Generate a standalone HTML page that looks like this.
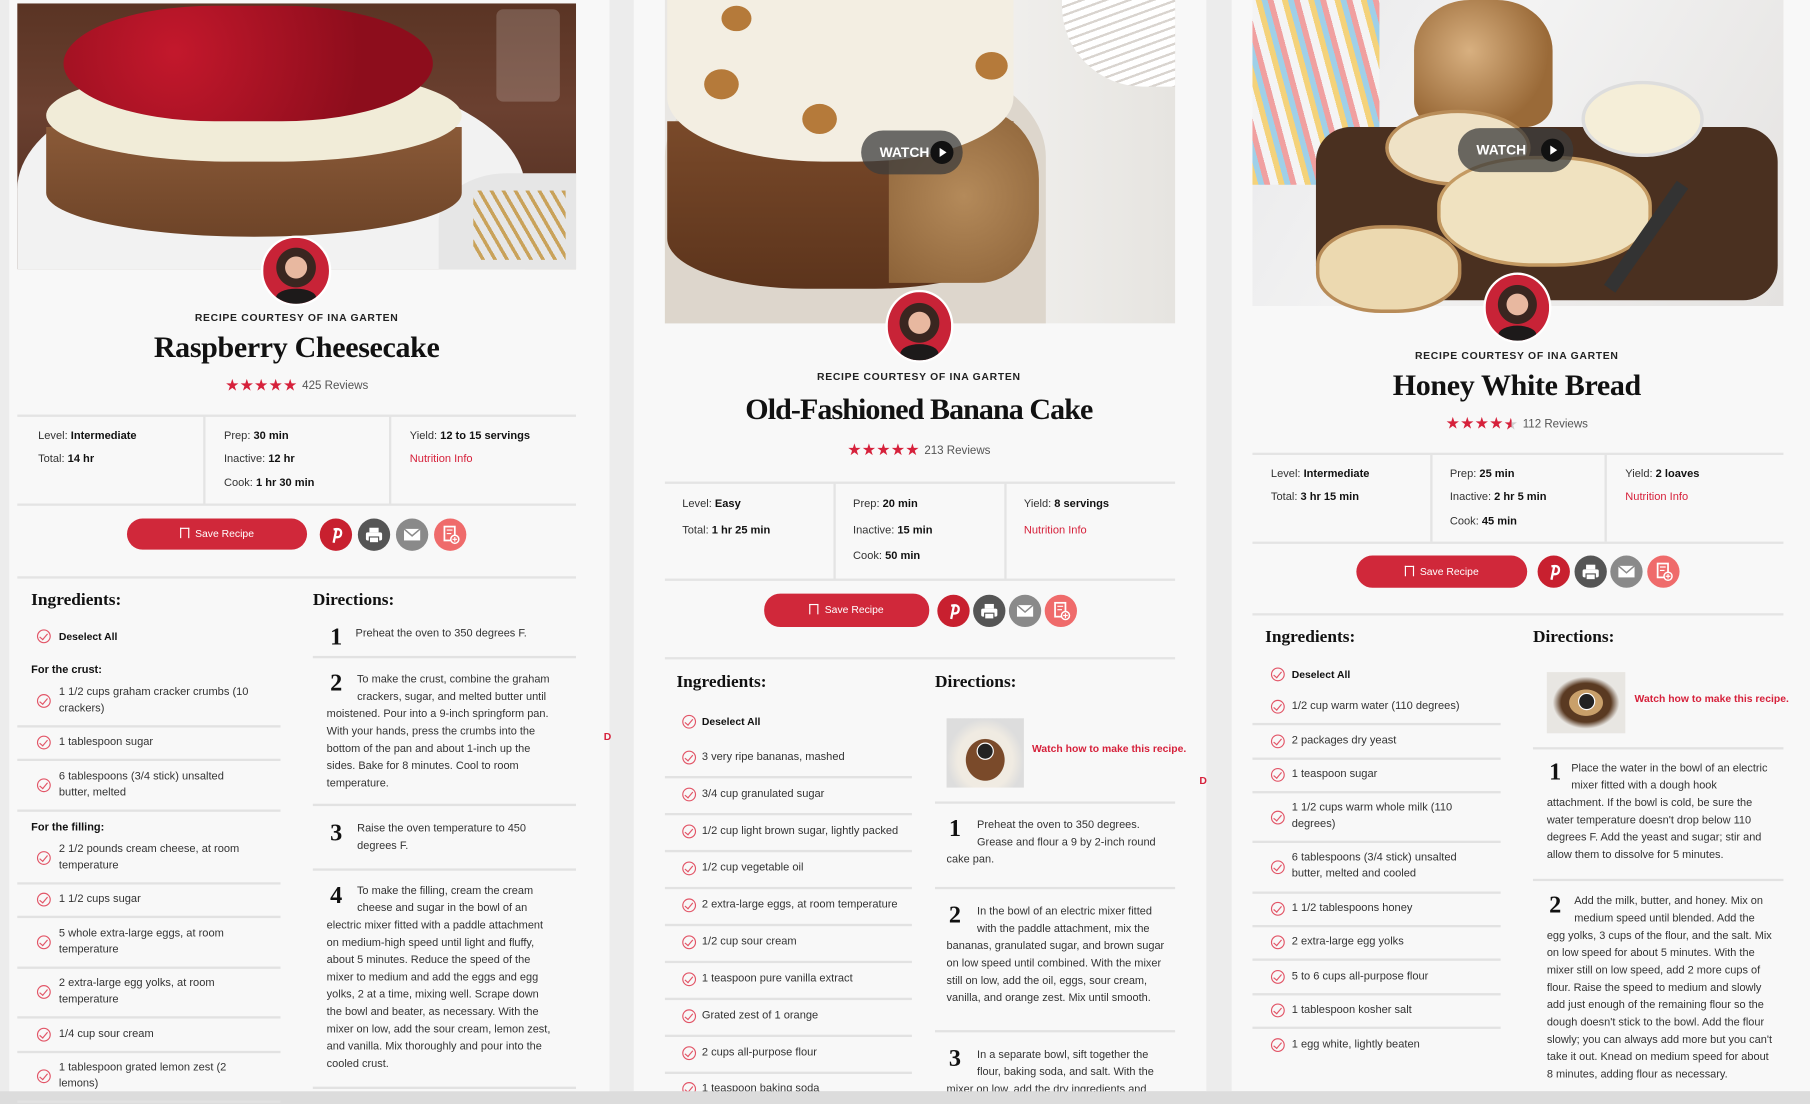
<!DOCTYPE html>
<html><head><meta charset="utf-8">
<style>
html,body{margin:0;padding:0;background:#ececec;overflow:hidden;width:1810px;height:1104px}
#w{position:absolute;left:0;top:0;width:1568px;height:956px;transform:scale(1.15434,1.1548);transform-origin:0 0;font-family:"Liberation Sans",sans-serif;color:#222}
.pn{position:absolute;background:#f8f8f8}
.a{position:absolute;white-space:nowrap}
.t{position:absolute;white-space:nowrap;font-size:9.6px;line-height:14px;color:#333}
.t b{color:#111}
.rc{position:absolute;white-space:nowrap;font-size:9px;letter-spacing:.6px;font-weight:bold;color:#222;transform:translateX(-50%)}
.ti{position:absolute;white-space:nowrap;font-family:"Liberation Serif",serif;font-weight:bold;font-size:26px;color:#111;transform:translateX(-50%);letter-spacing:-.3px}
.st{position:absolute;white-space:nowrap;transform:translateX(-50%);font-size:10px;color:#555}
.st span{color:#d6213b;font-size:14px;letter-spacing:0px;margin-right:4px;vertical-align:-1px}
.hl{position:absolute;height:2px;background:#e4e4e4}
.vl{position:absolute;width:2px;background:#e4e4e4}
.red{color:#d6213b}
.h{position:absolute;font-family:"Liberation Serif",serif;font-weight:bold;font-size:15px;color:#111}
.ck{position:absolute;width:10px;height:10px;border:1.3px solid #e25567;border-radius:50%}
.ck:after{content:"";position:absolute;left:3.3px;top:1px;width:2.6px;height:5.5px;border-right:1.3px solid #e25567;border-bottom:1.3px solid #e25567;transform:rotate(40deg)}
.ln{position:absolute;height:1.5px;background:#e2e2e2}
.num{position:absolute;font-family:"Liberation Serif",serif;font-weight:bold;font-size:21px;color:#111;line-height:20px}
.dt{position:absolute;white-space:nowrap;font-size:9.5px;line-height:15px;color:#333}
.av{position:absolute;border-radius:50%;border:2.5px solid #fff;background:radial-gradient(circle at 50% 45%,#e8b8a0 0 22%,#3a2620 23% 40%,#c82337 41%);overflow:hidden}
.av:after{content:"";position:absolute;left:20%;right:20%;bottom:-5%;height:28%;background:#1d1a1a;border-radius:50% 50% 0 0}
.sv{position:absolute;background:#d0283a;border-radius:14px;color:#fff;font-size:9px;text-align:center}
.sv i{display:inline-block;width:6px;height:8px;border:1px solid #fff;border-bottom:none;margin-right:5px;vertical-align:-1px}
.ic{position:absolute;width:28px;height:28px;border-radius:50%}
.ic svg{position:absolute;left:0;top:0}
.wt{position:absolute;font-size:9px;font-weight:bold;color:#d6213b;white-space:nowrap}
.watch{position:absolute;height:38px;border-radius:19px;background:rgba(60,60,60,.75);color:#fff;font-weight:bold;font-size:12px;line-height:38px}
.watch i{position:absolute;right:8px;top:9px;width:20px;height:20px;border-radius:50%;background:#111}
.watch i:after{content:"";position:absolute;left:8px;top:6px;border-left:6px solid #fff;border-top:4px solid transparent;border-bottom:4px solid transparent}
</style></head><body><div id="w">

<!-- panels -->
<div class="pn" style="left:8px;top:0;width:520px;height:956px"></div>
<div class="pn" style="left:549px;top:0;width:496px;height:945px"></div>
<div class="pn" style="left:1067px;top:0;width:501px;height:945px"></div>
<div class="a" style="left:0;top:945px;width:1568px;height:11px;background:#dcdcdc"></div>

<!-- ============ PANEL 1 ============ -->
<div class="a" style="left:15px;top:3px;width:484px;height:230px;background:linear-gradient(180deg,#5a3424 0,#6b4030 40%,#4a2a1c 100%)"></div>
<div class="a" style="left:15px;top:60px;width:440px;height:173px;border-radius:50% 50% 0 0/60% 60% 0 0;background:#f2f2f2"></div>
<div class="a" style="left:380px;top:150px;width:119px;height:83px;border-radius:50% 0 0 0;background:#e6e6e6"></div>
<div class="a" style="left:410px;top:165px;width:80px;height:60px;background:repeating-linear-gradient(60deg,transparent 0 6px,#c9a25a 6px 9px)"></div>
<div class="a" style="left:40px;top:110px;width:360px;height:95px;border-radius:0 0 50% 50%/0 0 40% 40%;background:linear-gradient(180deg,#8a5a38,#6e4428)"></div>
<div class="a" style="left:40px;top:60px;width:360px;height:80px;border-radius:45%/50%;background:#f1ecd8"></div>
<div class="a" style="left:55px;top:5px;width:320px;height:100px;border-radius:45%/55%;background:radial-gradient(circle at 30% 40%,#c3182c,#8d0d1c 70%)"></div>
<div class="a" style="left:430px;top:8px;width:55px;height:80px;background:rgba(255,255,255,.18);border-radius:6px"></div>
<div class="av" style="left:226px;top:204px;width:57px;height:57px"></div>
<div class="rc" style="left:257px;top:270px">RECIPE COURTESY OF INA GARTEN</div>
<div class="ti" style="left:257px;top:286px">Raspberry Cheesecake</div>
<div class="st" style="left:257px;top:325px"><span>★★★★★</span>425 Reviews</div>
<div class="hl" style="left:15px;top:359px;width:484px"></div>
<div class="hl" style="left:15px;top:436px;width:484px"></div>
<div class="vl" style="left:176px;top:360px;height:76px"></div>
<div class="vl" style="left:337px;top:360px;height:76px"></div>
<div class="t" style="left:33px;top:371px">Level: <b>Intermediate</b></div>
<div class="t" style="left:33px;top:391px">Total: <b>14 hr</b></div>
<div class="t" style="left:194px;top:371px">Prep: <b>30 min</b></div>
<div class="t" style="left:194px;top:391px">Inactive: <b>12 hr</b></div>
<div class="t" style="left:194px;top:412px">Cook: <b>1 hr 30 min</b></div>
<div class="t" style="left:355px;top:371px">Yield: <b>12 to 15 servings</b></div>
<div class="t red" style="left:355px;top:391px">Nutrition Info</div>
<div class="sv" style="left:110px;top:449px;width:156px;height:27px;line-height:27px"><i></i>Save Recipe</div>
<div class="ic" style="left:277px;top:449px;background:#c8202f"><svg width="28" height="28"><path d="M12 21 L14.5 9 M12 9.5 Q19 8 18.5 13 Q18 17 13.5 16" fill="none" stroke="#fff" stroke-width="2"/></svg></div>
<div class="ic" style="left:310px;top:449px;background:#555"><svg width="28" height="28"><rect x="10" y="8" width="8" height="4" fill="#fff"/><rect x="7" y="12" width="14" height="7" rx="1.5" fill="#fff"/><rect x="10" y="16" width="8" height="5" fill="#fff" stroke="#555" stroke-width="1"/></svg></div>
<div class="ic" style="left:343px;top:449px;background:#8a8a8a"><svg width="28" height="28"><rect x="7" y="9" width="14" height="10" fill="#fff"/><path d="M7 9 L14 15 L21 9" fill="none" stroke="#8a8a8a" stroke-width="1.3"/></svg></div>
<div class="ic" style="left:376px;top:449px;background:#ef6b6b"><svg width="28" height="28"><rect x="9" y="7" width="9" height="12" fill="none" stroke="#fff" stroke-width="1.5"/><path d="M11 10h5M11 13h4" stroke="#fff"/><circle cx="18" cy="18" r="3.5" fill="#ef6b6b" stroke="#fff" stroke-width="1.3"/><path d="M18 16v4M16 18h4" stroke="#fff"/></svg></div>
<div class="hl" style="left:15px;top:499px;width:484px"></div>
<div class="h" style="left:27px;top:512px">Ingredients:</div>
<div class="h" style="left:271px;top:512px">Directions:</div>
<div class="ck" style="left:32px;top:545px"></div><div class="t" style="left:51px;top:544px;font-size:9px"><b>Deselect All</b></div>
<div class="t" style="left:27px;top:574px;font-size:9.5px"><b>For the crust:</b></div>
<div class="ck" style="left:32px;top:601px"></div><div class="t" style="left:51px;top:593px">1 1/2 cups graham cracker crumbs (10<br>crackers)</div>
<div class="ln" style="left:15px;top:628px;width:228px"></div>
<div class="ck" style="left:32px;top:637px"></div><div class="t" style="left:51px;top:636px">1 tablespoon sugar</div>
<div class="ln" style="left:15px;top:657px;width:228px"></div>
<div class="ck" style="left:32px;top:674px"></div><div class="t" style="left:51px;top:666px">6 tablespoons (3/4 stick) unsalted<br>butter, melted</div>
<div class="ln" style="left:15px;top:701px;width:228px"></div>
<div class="t" style="left:27px;top:710px;font-size:9.5px"><b>For the filling:</b></div>
<div class="ck" style="left:32px;top:737px"></div><div class="t" style="left:51px;top:729px">2 1/2 pounds cream cheese, at room<br>temperature</div>
<div class="ln" style="left:15px;top:764px;width:228px"></div>
<div class="ck" style="left:32px;top:773px"></div><div class="t" style="left:51px;top:772px">1 1/2 cups sugar</div>
<div class="ln" style="left:15px;top:793px;width:228px"></div>
<div class="ck" style="left:32px;top:810px"></div><div class="t" style="left:51px;top:802px">5 whole extra-large eggs, at room<br>temperature</div>
<div class="ln" style="left:15px;top:837px;width:228px"></div>
<div class="ck" style="left:32px;top:853px"></div><div class="t" style="left:51px;top:845px">2 extra-large egg yolks, at room<br>temperature</div>
<div class="ln" style="left:15px;top:880px;width:228px"></div>
<div class="ck" style="left:32px;top:890px"></div><div class="t" style="left:51px;top:889px">1/4 cup sour cream</div>
<div class="ln" style="left:15px;top:910px;width:228px"></div>
<div class="ck" style="left:32px;top:926px"></div><div class="t" style="left:51px;top:918px">1 tablespoon grated lemon zest (2<br>lemons)</div>
<div class="ln" style="left:15px;top:953px;width:228px"></div>

<div class="num" style="left:286px;top:541px">1</div>
<div class="dt" style="left:308px;top:541px">Preheat the oven to 350 degrees F.</div>
<div class="ln" style="left:271px;top:568px;width:228px"></div>
<div class="num" style="left:286px;top:581px">2</div>
<div class="dt" style="left:283px;top:581px">&nbsp; &nbsp; &nbsp; &nbsp; &nbsp; To make the crust, combine the graham<br>&nbsp; &nbsp; &nbsp; &nbsp; &nbsp; crackers, sugar, and melted butter until<br>moistened. Pour into a 9-inch springform pan.<br>With your hands, press the crumbs into the<br>bottom of the pan and about 1-inch up the<br>sides. Bake for 8 minutes. Cool to room<br>temperature.</div>
<div class="ln" style="left:271px;top:696px;width:228px"></div>
<div class="num" style="left:286px;top:711px">3</div>
<div class="dt" style="left:283px;top:710px">&nbsp; &nbsp; &nbsp; &nbsp; &nbsp; Raise the oven temperature to 450<br>&nbsp; &nbsp; &nbsp; &nbsp; &nbsp; degrees F.</div>
<div class="ln" style="left:271px;top:752px;width:228px"></div>
<div class="num" style="left:286px;top:765px">4</div>
<div class="dt" style="left:283px;top:764px">&nbsp; &nbsp; &nbsp; &nbsp; &nbsp; To make the filling, cream the cream<br>&nbsp; &nbsp; &nbsp; &nbsp; &nbsp; cheese and sugar in the bowl of an<br>electric mixer fitted with a paddle attachment<br>on medium-high speed until light and fluffy,<br>about 5 minutes. Reduce the speed of the<br>mixer to medium and add the eggs and egg<br>yolks, 2 at a time, mixing well. Scrape down<br>the bowl and beater, as necessary. With the<br>mixer on low, add the sour cream, lemon zest,<br>and vanilla. Mix thoroughly and pour into the<br>cooled crust.</div>
<div class="ln" style="left:271px;top:941px;width:228px"></div>

<!-- ============ PANEL 2 ============ -->
<div class="a" style="left:576px;top:0;width:442px;height:280px;background:linear-gradient(90deg,#e9e7e4,#f2f1ef 60%,#e6e4e0)"></div>
<div class="a" style="left:576px;top:40px;width:330px;height:240px;border-radius:50% 50% 0 0/40% 40% 0 0;background:#ddd6cc"></div>
<div class="a" style="left:920px;top:0;width:98px;height:75px;border-radius:0 0 0 70px;background:repeating-linear-gradient(160deg,#fff 0 5px,#d9d4cf 5px 7px)"></div>
<div class="a" style="left:578px;top:105px;width:300px;height:145px;border-radius:0 0 40% 40%/0 0 30% 30%;background:linear-gradient(180deg,#7a4a2a,#5c341c)"></div>
<div class="a" style="left:770px;top:95px;width:130px;height:150px;border-radius:0 40% 40% 0;background:radial-gradient(circle,#b48a5a,#8c6238)"></div>
<div class="a" style="left:578px;top:0;width:300px;height:140px;border-radius:0 0 45% 45%/0 0 40% 40%;background:#f3eee2"></div>
<div class="a" style="left:610px;top:60px;width:30px;height:26px;border-radius:50%;background:#b57a3a"></div>
<div class="a" style="left:695px;top:90px;width:30px;height:26px;border-radius:50%;background:#b57a3a"></div>
<div class="a" style="left:845px;top:45px;width:28px;height:24px;border-radius:50%;background:#b57a3a"></div>
<div class="a" style="left:625px;top:5px;width:26px;height:22px;border-radius:50%;background:#b57a3a"></div>
<div class="watch" style="left:746px;top:113px;width:88px"><span style="margin-left:16px">WATCH</span><i></i></div>
<div class="av" style="left:767px;top:251px;width:55px;height:59px"></div>
<div class="rc" style="left:796px;top:321px">RECIPE COURTESY OF INA GARTEN</div>
<div class="ti" style="left:796px;top:340px;letter-spacing:-.8px">Old-Fashioned Banana Cake</div>
<div class="st" style="left:796px;top:381px"><span>★★★★★</span>213 Reviews</div>
<div class="hl" style="left:576px;top:417px;width:442px"></div>
<div class="hl" style="left:576px;top:501px;width:442px"></div>
<div class="vl" style="left:722px;top:418px;height:83px"></div>
<div class="vl" style="left:870px;top:418px;height:83px"></div>
<div class="t" style="left:591px;top:430px">Level: <b>Easy</b></div>
<div class="t" style="left:591px;top:453px">Total: <b>1 hr 25 min</b></div>
<div class="t" style="left:739px;top:430px">Prep: <b>20 min</b></div>
<div class="t" style="left:739px;top:453px">Inactive: <b>15 min</b></div>
<div class="t" style="left:739px;top:475px">Cook: <b>50 min</b></div>
<div class="t" style="left:887px;top:430px">Yield: <b>8 servings</b></div>
<div class="t red" style="left:887px;top:453px">Nutrition Info</div>
<div class="sv" style="left:662px;top:514px;width:143px;height:29px;line-height:29px"><i></i>Save Recipe</div>
<div class="ic" style="left:812px;top:515px;background:#c8202f"><svg width="28" height="28"><path d="M12 21 L14.5 9 M12 9.5 Q19 8 18.5 13 Q18 17 13.5 16" fill="none" stroke="#fff" stroke-width="2"/></svg></div>
<div class="ic" style="left:843px;top:515px;background:#555"><svg width="28" height="28"><rect x="10" y="8" width="8" height="4" fill="#fff"/><rect x="7" y="12" width="14" height="7" rx="1.5" fill="#fff"/><rect x="10" y="16" width="8" height="5" fill="#fff" stroke="#555" stroke-width="1"/></svg></div>
<div class="ic" style="left:874px;top:515px;background:#8a8a8a"><svg width="28" height="28"><rect x="7" y="9" width="14" height="10" fill="#fff"/><path d="M7 9 L14 15 L21 9" fill="none" stroke="#8a8a8a" stroke-width="1.3"/></svg></div>
<div class="ic" style="left:905px;top:515px;background:#ef6b6b"><svg width="28" height="28"><rect x="9" y="7" width="9" height="12" fill="none" stroke="#fff" stroke-width="1.5"/><path d="M11 10h5M11 13h4" stroke="#fff"/><circle cx="18" cy="18" r="3.5" fill="#ef6b6b" stroke="#fff" stroke-width="1.3"/><path d="M18 16v4M16 18h4" stroke="#fff"/></svg></div>
<div class="hl" style="left:576px;top:569px;width:442px"></div>
<div class="h" style="left:586px;top:583px">Ingredients:</div>
<div class="h" style="left:810px;top:583px">Directions:</div>
<div class="ck" style="left:591px;top:619px"></div><div class="t" style="left:608px;top:618px;font-size:9px"><b>Deselect All</b></div>
<div class="ck" style="left:591px;top:650px"></div><div class="t" style="left:608px;top:649px">3 very ripe bananas, mashed</div>
<div class="ln" style="left:576px;top:672px;width:214px"></div>
<div class="ck" style="left:591px;top:682px"></div><div class="t" style="left:608px;top:681px">3/4 cup granulated sugar</div>
<div class="ln" style="left:576px;top:704px;width:214px"></div>
<div class="ck" style="left:591px;top:714px"></div><div class="t" style="left:608px;top:713px">1/2 cup light brown sugar, lightly packed</div>
<div class="ln" style="left:576px;top:736px;width:214px"></div>
<div class="ck" style="left:591px;top:746px"></div><div class="t" style="left:608px;top:745px">1/2 cup vegetable oil</div>
<div class="ln" style="left:576px;top:768px;width:214px"></div>
<div class="ck" style="left:591px;top:778px"></div><div class="t" style="left:608px;top:777px">2 extra-large eggs, at room temperature</div>
<div class="ln" style="left:576px;top:800px;width:214px"></div>
<div class="ck" style="left:591px;top:810px"></div><div class="t" style="left:608px;top:809px">1/2 cup sour cream</div>
<div class="ln" style="left:576px;top:832px;width:214px"></div>
<div class="ck" style="left:591px;top:842px"></div><div class="t" style="left:608px;top:841px">1 teaspoon pure vanilla extract</div>
<div class="ln" style="left:576px;top:864px;width:214px"></div>
<div class="ck" style="left:591px;top:874px"></div><div class="t" style="left:608px;top:873px">Grated zest of 1 orange</div>
<div class="ln" style="left:576px;top:896px;width:214px"></div>
<div class="ck" style="left:591px;top:906px"></div><div class="t" style="left:608px;top:905px">2 cups all-purpose flour</div>
<div class="ln" style="left:576px;top:928px;width:214px"></div>
<div class="ck" style="left:591px;top:937px"></div><div class="t" style="left:608px;top:936px">1 teaspoon baking soda</div>

<div class="a" style="left:820px;top:622px;width:67px;height:60px;background:radial-gradient(ellipse at 50% 60%,#7a4a2a 0 35%,#f0ebe2 36% 50%,#ddd 70%)"></div>
<div class="a" style="left:846px;top:643px;width:13px;height:13px;border-radius:50%;background:#222;border:1.5px solid #fff"></div>
<div class="wt" style="left:894px;top:643px">Watch how to make this recipe.</div>
<div class="ln" style="left:810px;top:694px;width:208px"></div>
<div class="num" style="left:822px;top:707px">1</div>
<div class="dt" style="left:820px;top:707px">&nbsp; &nbsp; &nbsp; &nbsp; &nbsp; Preheat the oven to 350 degrees.<br>&nbsp; &nbsp; &nbsp; &nbsp; &nbsp; Grease and flour a 9 by 2-inch round<br>cake pan.</div>
<div class="ln" style="left:810px;top:768px;width:208px"></div>
<div class="num" style="left:822px;top:782px">2</div>
<div class="dt" style="left:820px;top:782px">&nbsp; &nbsp; &nbsp; &nbsp; &nbsp; In the bowl of an electric mixer fitted<br>&nbsp; &nbsp; &nbsp; &nbsp; &nbsp; with the paddle attachment, mix the<br>bananas, granulated sugar, and brown sugar<br>on low speed until combined. With the mixer<br>still on low, add the oil, eggs, sour cream,<br>vanilla, and orange zest. Mix until smooth.</div>
<div class="ln" style="left:810px;top:892px;width:208px"></div>
<div class="num" style="left:822px;top:906px">3</div>
<div class="dt" style="left:820px;top:906px">&nbsp; &nbsp; &nbsp; &nbsp; &nbsp; In a separate bowl, sift together the<br>&nbsp; &nbsp; &nbsp; &nbsp; &nbsp; flour, baking soda, and salt. With the<br>mixer on low, add the dry ingredients and</div>
<div class="a" style="left:549px;top:945px;width:496px;height:11px;background:#dcdcdc"></div>

<!-- ============ PANEL 3 ============ -->
<div class="a" style="left:1085px;top:0;width:460px;height:265px;background:linear-gradient(120deg,#e8e8ea,#f3f3f3 40%,#e4e2e0)"></div>
<div class="a" style="left:1085px;top:0;width:110px;height:160px;background:repeating-linear-gradient(75deg,#f4d27a 0 5px,#9fd0e8 5px 10px,#f0a0a0 10px 15px,#f4f4f4 15px 22px)"></div>
<div class="a" style="left:1140px;top:110px;width:400px;height:150px;border-radius:30px;background:#4a3020"></div>
<div class="a" style="left:1225px;top:0;width:120px;height:110px;border-radius:40% 40% 20% 20%;background:radial-gradient(circle at 40% 40%,#d8b080,#9a6a38 70%)"></div>
<div class="a" style="left:1200px;top:95px;width:120px;height:60px;border-radius:50%;background:#efe2c6;border:3px solid #b88c58"></div>
<div class="a" style="left:1245px;top:135px;width:180px;height:90px;border-radius:45%;background:#f0e2c0;border:3px solid #c49a62"></div>
<div class="a" style="left:1140px;top:195px;width:120px;height:70px;border-radius:45%;background:#ecd9b0;border:3px solid #b88c58"></div>
<div class="a" style="left:1370px;top:70px;width:100px;height:60px;border-radius:50%;background:#f5eed8;border:3px solid #ddd"></div>
<div class="a" style="left:1420px;top:150px;width:12px;height:110px;background:#333;transform:rotate(35deg)"></div>
<div class="watch" style="left:1263px;top:111px;width:100px"><span style="margin-left:16px">WATCH</span><i></i></div>
<div class="av" style="left:1285px;top:236px;width:55px;height:57px"></div>
<div class="rc" style="left:1314px;top:303px">RECIPE COURTESY OF INA GARTEN</div>
<div class="ti" style="left:1314px;top:319px">Honey White Bread</div>
<div class="st" style="left:1314px;top:358px"><span>★★★★<span style="margin:0;font-size:14px;background:linear-gradient(90deg,#d6213b 55%,#ccc 55%);-webkit-background-clip:text;color:transparent">★</span></span>112 Reviews</div>
<div class="hl" style="left:1085px;top:392px;width:460px"></div>
<div class="hl" style="left:1085px;top:469px;width:460px"></div>
<div class="vl" style="left:1239px;top:393px;height:76px"></div>
<div class="vl" style="left:1390px;top:393px;height:76px"></div>
<div class="t" style="left:1101px;top:404px">Level: <b>Intermediate</b></div>
<div class="t" style="left:1101px;top:424px">Total: <b>3 hr 15 min</b></div>
<div class="t" style="left:1256px;top:404px">Prep: <b>25 min</b></div>
<div class="t" style="left:1256px;top:424px">Inactive: <b>2 hr 5 min</b></div>
<div class="t" style="left:1256px;top:445px">Cook: <b>45 min</b></div>
<div class="t" style="left:1408px;top:404px">Yield: <b>2 loaves</b></div>
<div class="t red" style="left:1408px;top:424px">Nutrition Info</div>
<div class="sv" style="left:1175px;top:481px;width:148px;height:28px;line-height:28px"><i></i>Save Recipe</div>
<div class="ic" style="left:1332px;top:481px;background:#c8202f"><svg width="28" height="28"><path d="M12 21 L14.5 9 M12 9.5 Q19 8 18.5 13 Q18 17 13.5 16" fill="none" stroke="#fff" stroke-width="2"/></svg></div>
<div class="ic" style="left:1364px;top:481px;background:#555"><svg width="28" height="28"><rect x="10" y="8" width="8" height="4" fill="#fff"/><rect x="7" y="12" width="14" height="7" rx="1.5" fill="#fff"/><rect x="10" y="16" width="8" height="5" fill="#fff" stroke="#555" stroke-width="1"/></svg></div>
<div class="ic" style="left:1395px;top:481px;background:#8a8a8a"><svg width="28" height="28"><rect x="7" y="9" width="14" height="10" fill="#fff"/><path d="M7 9 L14 15 L21 9" fill="none" stroke="#8a8a8a" stroke-width="1.3"/></svg></div>
<div class="ic" style="left:1427px;top:481px;background:#ef6b6b"><svg width="28" height="28"><rect x="9" y="7" width="9" height="12" fill="none" stroke="#fff" stroke-width="1.5"/><path d="M11 10h5M11 13h4" stroke="#fff"/><circle cx="18" cy="18" r="3.5" fill="#ef6b6b" stroke="#fff" stroke-width="1.3"/><path d="M18 16v4M16 18h4" stroke="#fff"/></svg></div>
<div class="hl" style="left:1085px;top:531px;width:460px"></div>
<div class="h" style="left:1096px;top:544px">Ingredients:</div>
<div class="h" style="left:1328px;top:544px">Directions:</div>
<div class="ck" style="left:1101px;top:578px"></div><div class="t" style="left:1119px;top:577px;font-size:9px"><b>Deselect All</b></div>
<div class="ck" style="left:1101px;top:606px"></div><div class="t" style="left:1119px;top:605px">1/2 cup warm water (110 degrees)</div>
<div class="ln" style="left:1085px;top:626px;width:215px"></div>
<div class="ck" style="left:1101px;top:636px"></div><div class="t" style="left:1119px;top:635px">2 packages dry yeast</div>
<div class="ln" style="left:1085px;top:656px;width:215px"></div>
<div class="ck" style="left:1101px;top:665px"></div><div class="t" style="left:1119px;top:664px">1 teaspoon sugar</div>
<div class="ln" style="left:1085px;top:685px;width:215px"></div>
<div class="ck" style="left:1101px;top:702px"></div><div class="t" style="left:1119px;top:693px">1 1/2 cups warm whole milk (110<br>degrees)</div>
<div class="ln" style="left:1085px;top:728px;width:215px"></div>
<div class="ck" style="left:1101px;top:745px"></div><div class="t" style="left:1119px;top:736px">6 tablespoons (3/4 stick) unsalted<br>butter, melted and cooled</div>
<div class="ln" style="left:1085px;top:772px;width:215px"></div>
<div class="ck" style="left:1101px;top:781px"></div><div class="t" style="left:1119px;top:780px">1 1/2 tablespoons honey</div>
<div class="ln" style="left:1085px;top:801px;width:215px"></div>
<div class="ck" style="left:1101px;top:810px"></div><div class="t" style="left:1119px;top:809px">2 extra-large egg yolks</div>
<div class="ln" style="left:1085px;top:830px;width:215px"></div>
<div class="ck" style="left:1101px;top:840px"></div><div class="t" style="left:1119px;top:839px">5 to 6 cups all-purpose flour</div>
<div class="ln" style="left:1085px;top:860px;width:215px"></div>
<div class="ck" style="left:1101px;top:869px"></div><div class="t" style="left:1119px;top:868px">1 tablespoon kosher salt</div>
<div class="ln" style="left:1085px;top:889px;width:215px"></div>
<div class="ck" style="left:1101px;top:899px"></div><div class="t" style="left:1119px;top:898px">1 egg white, lightly beaten</div>

<div class="a" style="left:1340px;top:582px;width:68px;height:53px;background:radial-gradient(ellipse at 50% 50%,#c9a06a 0 30%,#5a3a22 31% 45%,#e8e6e2 60%)"></div>
<div class="a" style="left:1367px;top:600px;width:13px;height:13px;border-radius:50%;background:#222;border:1.5px solid #fff"></div>
<div class="wt" style="left:1416px;top:600px">Watch how to make this recipe.</div>
<div class="ln" style="left:1328px;top:647px;width:217px"></div>
<div class="num" style="left:1342px;top:658px">1</div>
<div class="dt" style="left:1340px;top:658px">&nbsp; &nbsp; &nbsp; &nbsp; Place the water in the bowl of an electric<br>&nbsp; &nbsp; &nbsp; &nbsp; mixer fitted with a dough hook<br>attachment. If the bowl is cold, be sure the<br>water temperature doesn't drop below 110<br>degrees F. Add the yeast and sugar; stir and<br>allow them to dissolve for 5 minutes.</div>
<div class="ln" style="left:1328px;top:761px;width:217px"></div>
<div class="num" style="left:1342px;top:773px">2</div>
<div class="dt" style="left:1340px;top:773px">&nbsp; &nbsp; &nbsp; &nbsp; &nbsp;Add the milk, butter, and honey. Mix on<br>&nbsp; &nbsp; &nbsp; &nbsp; &nbsp;medium speed until blended. Add the<br>egg yolks, 3 cups of the flour, and the salt. Mix<br>on low speed for about 5 minutes. With the<br>mixer still on low speed, add 2 more cups of<br>flour. Raise the speed to medium and slowly<br>add just enough of the remaining flour so the<br>dough doesn't stick to the bowl. Add the flour<br>slowly; you can always add more but you can't<br>take it out. Knead on medium speed for about<br>8 minutes, adding flour as necessary.</div>
<div class="a" style="left:1067px;top:945px;width:501px;height:11px;background:#dcdcdc"></div>

<!-- stray edge marks -->
<div class="a red" style="left:523px;top:633px;font-size:9px;font-weight:bold">D</div>
<div class="a red" style="left:1039px;top:671px;font-size:9px;font-weight:bold">D</div>
</div></body></html>
